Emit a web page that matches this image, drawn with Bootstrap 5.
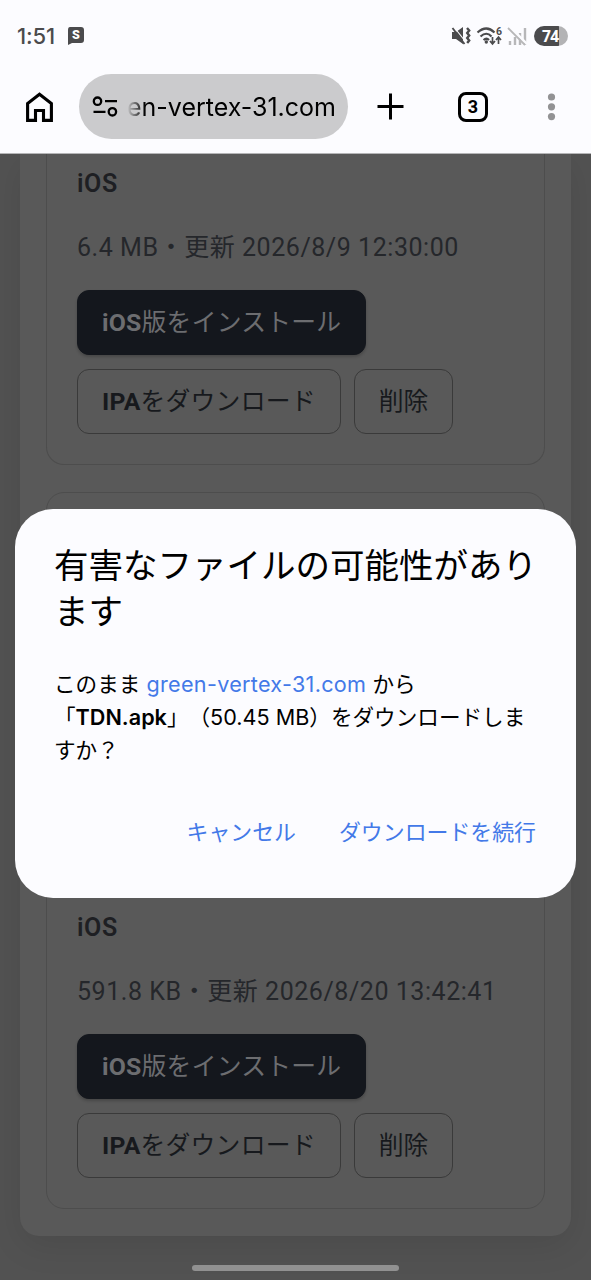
<!DOCTYPE html>
<html lang="ja">
<head>
<meta charset="utf-8">
<meta name="viewport" content="width=device-width, initial-scale=1">
<title>ダウンロードの確認</title>
<link href="https://cdn.jsdelivr.net/npm/bootstrap@5.3.0/dist/css/bootstrap.min.css" rel="stylesheet">
<style>
body{width:591px;height:1280px;overflow:hidden;background:#525252;font-family:Roboto,"Noto Sans CJK JP",sans-serif;color:#1e1f23}
.browser-top{height:154px;background:#fcfcff;border-bottom:1px solid #b5b5b7;flex:none}
.status-row{height:74px;padding:0 23px 3px 17px;color:#4b4b4d}
.clock{font:500 22px/26px Inter,sans-serif;letter-spacing:-.1px}
.battery{width:34px;height:20px;border-radius:10px;background:linear-gradient(90deg,#4b4b4d 75%,#b3b3b5 75%);color:#fff;font:700 15.5px/20px "Open Sans",sans-serif;padding-left:8px;letter-spacing:-.5px}
.tool-row{height:65px;color:#000}
.omni{width:269px;height:65px;background:#cbcbcd;margin-left:25px;padding:0 12px 0 13px}
.url{font:400 25px/34px Inter,sans-serif;white-space:nowrap;-webkit-mask-image:linear-gradient(90deg,transparent,#000 18px);mask-image:linear-gradient(90deg,transparent,#000 18px)}
.tabs-icon{width:30px;height:30px;border:3px solid #000;border-radius:8px;font:700 18px/24px Roboto,sans-serif;margin-left:54px}
.page-area{height:1126px;padding:0 20px 44px;overflow:hidden}
.panel{height:1082px;background:#595959;border-radius:0 0 19px 19px;padding:0 26px 27px;box-shadow:0 10px 34px rgba(0,0,0,.09)}
.entry{border:1px solid #4d4d4d;border-radius:18px;padding:0 30px 30px;display:flex;flex-direction:column;justify-content:flex-end}
.entry-first{height:311px;border-top:0;border-radius:0 0 18px 18px;margin-bottom:27px}
.entry-last{height:717px}
.os-name{font-size:25px;line-height:36px;font-weight:600;margin-bottom:28px;letter-spacing:.6px}
.meta{font-size:25px;line-height:36px;margin-bottom:24px;white-space:nowrap;color:#25272b;letter-spacing:.55px}
.actions{gap:14px 13.5px}
.act{font-size:24.8px;line-height:36px;letter-spacing:.22px;border-radius:12px;padding:14px 24px 13px 24px;border:1px solid #3a3a3a;color:#17191d;white-space:nowrap;font-weight:400;height:65px}
.act:last-child{padding:14px 23.5px 13px;letter-spacing:0}
.act b{font-weight:700}
.act-dark{background:#14171d;border-color:#14171d;color:#6c6d70;box-shadow:0 2px 3px rgba(0,0,0,.2)}
.dialog{position:absolute;left:15px;top:509px;width:561px;height:389px;border-radius:38px;background:#fcfcff;color:#000;padding:31px 40px 0 39px;font-family:Inter,"Noto Sans CJK JP",sans-serif;text-spacing-trim:space-all}
.dialog h1{font:400 34.5px/46px "Noto Sans CJK JP",sans-serif;white-space:nowrap;margin:0 0 36px}
.dialog p{font-size:21.6px;line-height:33px;white-space:nowrap;margin:0}
.blue{color:#4379e8}
.site{letter-spacing:.3px}
.dialog .choice{font:400 21.9px/32px "Noto Sans CJK JP",sans-serif;text-decoration:none;white-space:nowrap}
.homebar{position:absolute;left:192px;top:1265px;width:207px;height:6px;border-radius:3px;background:#919191}
</style>
</head>
<body class="position-relative">
<header class="browser-top">
  <div class="status-row d-flex align-items-center">
    <span class="clock">1:51</span>
    <svg style="margin-left:12px" width="18" height="19" viewBox="0 0 18 19"><path d="M3 1h11q3 0 3 3v10q0 3-3 3H5l-4 2V4q0-3 2-3z" fill="#4b4b4d"/><text x="9" y="13.2" text-anchor="middle" font-family="Roboto" font-weight="900" font-size="12.5" fill="#fff">S</text></svg>
    <div class="d-flex align-items-center ms-auto">
      <svg width="20" height="20" viewBox="0 0 20 20" fill="#4b4b4d"><path d="M1 6h4l7-5v17l-7-5H1z"/><path d="M3 1l11 14" stroke="#fcfcff" stroke-width="1.200"/><path d="M1.500 2l12 16" stroke="#4b4b4d" stroke-width="1.800"/><path d="M16 2l2.200 2.500-2 2.500 2 2.500-2 2.500 2 2.500-2 2.500" fill="none" stroke="#4b4b4d" stroke-width="2.400"/></svg>
      <svg style="margin-left:5px" width="27" height="20" viewBox="0 0 27 20" fill="none" stroke="#4b4b4d"><path d="M1.500 6.500q9-8 17 0M4.500 10.500q6-5.500 11 0M7.500 14q3-2.500 5.500 0" stroke-width="2.200"/><circle cx="10.300" cy="16" r="1.700" fill="#4b4b4d" stroke="none"/><path d="M16.500 11v6.500M14 15l2.500 3 2.500-3M22.500 18v-6.500M20 14l2.500-3 2.500 3" stroke-width="1.700"/><text x="20" y="8.500" font-family="Roboto" font-weight="700" font-size="10.500" fill="#4b4b4d" stroke="none">6</text></svg>
      <svg style="margin-left:4px" width="20" height="20" viewBox="0 0 20 20" fill="none" stroke="#b7b7b9" stroke-width="2.400"><path d="M3 15v4M8 11v8M13 7v12M18 2v17"/><path d="M3 1l17 17" stroke="#fcfcff" stroke-width="2.500"/><path d="M1 2l17 17" stroke-width="1.800"/></svg>
      <span class="battery" style="margin-left:7px">74</span>
    </div>
  </div>
  <div class="tool-row d-flex align-items-center">
    <svg style="margin-left:25px" width="29" height="30" viewBox="0 0 29 30" fill="none" stroke="#000" stroke-width="3.100"><path d="M2.600 28.400V11.400L14.500 2.200 26.400 11.400V28.400H18.500V18.500H10.500V28.400z"/></svg>
    <div class="omni rounded-pill d-flex align-items-center justify-content-between">
      <svg width="26" height="22" viewBox="0 0 26 22" fill="none" stroke="#000" stroke-width="2.300"><circle cx="5.500" cy="5.200" r="3.700"/><path d="M13 5.200h12M1.500 15.800h12"/><circle cx="20.400" cy="15.800" r="3.700"/></svg>
      <span class="url">en-vertex-31.com</span>
    </div>
    <svg style="margin-left:29px" width="27" height="27" viewBox="0 0 27 27" stroke="#000" stroke-width="3"><path d="M13.500 .5v26M.5 13.500h26"/></svg>
    <div class="tabs-icon text-center">3</div>
    <svg style="margin-left:59px" width="9" height="28" viewBox="0 0 9 28" fill="#929294"><circle cx="4.500" cy="4" r="3.600"/><circle cx="4.500" cy="13.800" r="3.600"/><circle cx="4.500" cy="23.600" r="3.600"/></svg>
  </div>
</header>
<main class="page-area">
  <div class="panel">
    <section class="entry entry-first">
      <div class="os-name">iOS</div>
      <div class="meta">6.4 MB・更新 2026/8/9 12:30:00</div>
      <div class="actions d-flex flex-wrap">
        <div class="act act-dark"><b>iOS</b>版をインストール</div>
        <div class="act"><b>IPA</b>をダウンロード</div>
        <div class="act">削除</div>
      </div>
    </section>
    <section class="entry entry-last">
      <div class="os-name">iOS</div>
      <div class="meta">591.8 KB・更新 2026/8/20 13:42:41</div>
      <div class="actions d-flex flex-wrap">
        <div class="act act-dark"><b>iOS</b>版をインストール</div>
        <div class="act"><b>IPA</b>をダウンロード</div>
        <div class="act">削除</div>
      </div>
    </section>
  </div>
</main>
<div class="dialog" role="dialog">
  <h1>有害なファイルの可能性があり<br>ます</h1>
  <p>このまま <span class="blue site">green-vertex-31.com</span> から<br>「<b class="fw-semibold">TDN.apk</b>」（50.45 MB）をダウンロードしま<br>すか？</p>
  <div class="d-flex justify-content-end" style="margin-top:48px;gap:43px">
    <a class="choice blue">キャンセル</a><a class="choice blue">ダウンロードを続行</a>
  </div>
</div>
<div class="homebar"></div>
<script src="https://cdn.jsdelivr.net/npm/bootstrap@5.3.0/dist/js/bootstrap.bundle.min.js"></script>
</body>
</html>
